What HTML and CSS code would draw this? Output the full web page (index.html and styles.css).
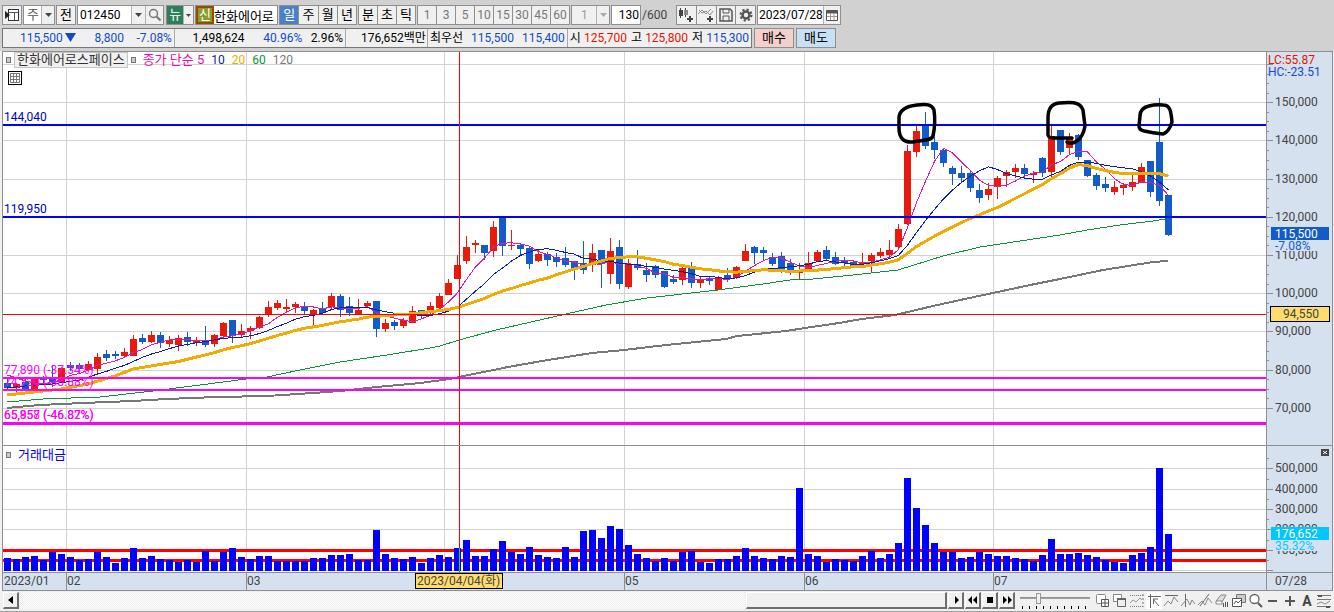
FILE: index.html
```
<!DOCTYPE html>
<html lang="ko">
<head>
<meta charset="utf-8">
<title>한화에어로스페이스 차트</title>
<link rel="stylesheet" href="styles.css">
</head>
<body>
<header class="top">
  <div class="toolbar">
    <button class="btn icon-btn" aria-label="패널"><svg width="16" height="16" viewBox="0 0 16 16"><rect x="4.500" y="2.500" width="10" height="11" fill="#fff" stroke="#333"/><path d="M5 5.500h9M10.500 6v7" stroke="#555"/><path d="M1 4v8l5-4z" fill="#222"/></svg></button>
    <span class="combo combo-kind"><select aria-label="종목 구분"><option>주</option></select><svg class="arrow" width="13" height="18"><path d="M3 7h7l-3.500 4z" fill="#444"/></svg></span>
    <button class="btn sq">전</button>
    <span class="combo combo-code"><input type="text" aria-label="종목 코드" value="012450"><button class="cell" aria-label="목록"><svg width="13" height="18"><path d="M3 7h7l-3.500 4z" fill="#444"/></svg></button><button class="cell find" aria-label="검색"><svg width="16" height="16" viewBox="0 0 16 16"><circle cx="6.500" cy="6.500" r="4" fill="none" stroke="#777" stroke-width="1.500"/><path d="M9.500 9.500l4 4" stroke="#777" stroke-width="2.200"/></svg></button></span>
    <span class="combo combo-news"><button class="news">뉴</button><button class="cell" aria-label="뉴스 목록"><svg width="9" height="18"><path d="M2 8h5l-2.500 3z" fill="#444"/></svg></button></span>
    <span class="combo combo-name"><button class="credit">신</button><input type="text" aria-label="종목명" value="한화에어로"></span>
    <div class="group period">
      <button class="on">일</button><button>주</button><button>월</button><button>년</button>
    </div>
    <div class="group unit">
      <button>분</button><button>초</button><button>틱</button>
    </div>
    <div class="group minutes">
      <button disabled>1</button><button disabled>3</button><button disabled>5</button><button disabled>10</button><button disabled>15</button><button disabled>30</button><button disabled>45</button><button disabled>60</button>
    </div>
    <span class="combo combo-tick"><select aria-label="간격" disabled><option>1</option></select><svg class="arrow" width="13" height="18"><path d="M3 7h7l-3.500 4z" fill="#aaa"/></svg></span>
    <label class="count"><input type="text" value="130" aria-label="조회 개수"><span>/600</span></label>
    <div class="group tools">
      <button aria-label="차트 유형"><svg width="18" height="18" viewBox="0 0 18 18"><path d="M3.500 2v10M8.500 2v9" stroke="#444"/><path d="M2 4h4v6H2z" fill="#444"/><path d="M7 4h4v5H7z" fill="#888"/><path d="M10 13h6M13 10v6" stroke="#444" stroke-width="2"/></svg></button><button aria-label="지표 추가"><svg width="18" height="18" viewBox="0 0 18 18"><path d="M1 8l4-4 4 4 5-5M2 4l3 3 4-2 4 4 3-4" fill="none" stroke="#888"/><path d="M10 13h6M13 10v6" stroke="#444" stroke-width="2"/></svg></button><button aria-label="저장"><svg width="18" height="18" viewBox="0 0 18 18"><path d="M3 3h10l2 2v10H3z" fill="none" stroke="#555" stroke-width="1.500"/><path d="M6 3v4h6V3M6 15v-5h6v5" fill="none" stroke="#555"/></svg></button><button aria-label="설정"><svg width="18" height="18" viewBox="0 0 18 18"><circle cx="9" cy="9" r="3.500" fill="none" stroke="#555" stroke-width="2.500"/><circle cx="9" cy="9" r="5.500" fill="none" stroke="#555" stroke-width="2" stroke-dasharray="2.200 2.100"/></svg></button>
    </div>
    <span class="combo combo-date"><input type="text" aria-label="날짜" value="2023/07/28"><button class="cell" aria-label="달력"><svg width="16" height="16" viewBox="0 0 16 16"><path d="M2.500 3.500h11v10h-11z" fill="#fff" stroke="#555"/><path d="M2 5h12" stroke="#555" stroke-width="3"/><path d="M3 9.500h10M6.500 6v7M10 6v7" stroke="#999"/></svg></button></span>
  </div>
  <div class="quote">
    <div class="quote-box">
      <div class="q q1 down"><span>115,500</span><svg width="11" height="10"><path d="M0 0h11L5.500 9z" fill="#0f4cc8"/></svg><span class="w-diff">8,800</span><span class="w-rate">-7.08%</span></div>
      <div class="q q2"><span class="w-vol">1,498,624</span><span class="w-58 down">40.96%</span><span class="w-41">2.96%</span></div>
      <div class="q q3"><span>176,652백만</span></div>
      <div class="q q4"><span>최우선</span><span class="w-50 down">115,500</span><span class="w-50 down">115,400</span></div>
      <div class="q q5"><span>시</span><span class="up w-45">125,700</span><span class="lab">고</span><span class="up w-45">125,800</span><span class="lab">저</span><span class="down w-45">115,300</span></div>
    </div>
    <button class="order buy">매수</button><button class="order sell">매도</button>
  </div>
</header>

<main class="chart">
  <section class="pane price">
    <svg id="price" class="plot" role="img" aria-label="일봉 차트"></svg>
    <div class="legend"><i class="dot"></i><b class="name">한화에어로스페이스</b><i class="dot"></i><span class="m5">종가 단순 5</span><span class="m10">10</span><span class="m20">20</span><span class="m60">60</span><span class="m120">120</span></div>
    <button class="grid-btn" aria-label="데이터 표"><svg width="14" height="14"><path d="M2.500 2.500h9v9h-9zM2 5.500h10M2 8.500h10M5.500 2v10M8.500 2v10" fill="none" stroke="#777"/></svg></button>
  </section>
  <svg id="priceAxis" class="axis price-axis"></svg>
  <section class="pane volume">
    <svg id="volume" class="plot" role="img" aria-label="거래대금"></svg>
    <div class="legend"><i class="dot"></i><span class="vol-name">거래대금</span></div>
  </section>
  <svg id="volumeAxis" class="axis volume-axis"></svg>
  <svg id="dates" class="dates"></svg>
  <div class="last-date">07/28</div>
</main>

<footer class="bottom">
  <div class="scroll">
    <button class="raised" aria-label="이전"><svg width="14" height="14"><path d="M9 3v8L4 7z"/></svg></button>
    <div class="track"></div>
    <div class="thumb"></div>
    <button class="raised" aria-label="다음"><svg width="14" height="14"><path d="M6 3v8l4-4z"/></svg></button>
    <button class="raised" aria-label="뒤로"><svg width="14" height="14"><path d="M6 3v8L2 7zM11 3v8L7 7z"/></svg></button>
    <button class="raised" aria-label="정지"><svg width="14" height="14"><path d="M4 4h6v6H4z"/></svg></button>
    <button class="raised" aria-label="앞으로"><svg width="14" height="14"><path d="M3 3v8l4-4zM8 3v8l4-4z"/></svg></button>
  </div>
  <div class="zoom"><input type="range" min="0" max="100" value="24" aria-label="확대"><div class="ticks"></div></div>
  <div class="draw">
    <button aria-label="차트 추가"><svg width="16" height="16" viewBox="0 0 16 16"><rect x="1.500" y="1.500" width="9" height="9" rx="1" fill="#fff" stroke="#888"/><path d="M6.500 6.500h7v7h-7zM10 7v6M7 10h6" fill="#fff" stroke="#555"/></svg></button><button aria-label="차트 복사"><svg width="16" height="16" viewBox="0 0 16 16"><path d="M1.500 1.500h8v7h-8z" fill="#fff" stroke="#888"/><path d="M5.500 5.500h8v8h-8z" fill="#eee" stroke="#666"/><path d="M5 6h9" stroke="#666" stroke-width="2"/></svg></button><button aria-label="구간"><svg width="16" height="16" viewBox="0 0 16 16"><path d="M1 2.500h13M1 13.500h13" stroke="#777" stroke-dasharray="1 1"/><path d="M1 10l3-3 3 2 4-4 2 2" fill="none" stroke="#999"/><path d="M14 1v13" stroke="#777" stroke-dasharray="2 2"/></svg></button><button class="active" aria-label="십자선"><svg width="16" height="16" viewBox="0 0 16 16"><path d="M2 3.500h13M4.500 1v14" stroke="#666"/><path d="M7 6h5M7.500 6v5M7 6l6 7" stroke="#666"/></svg></button><button aria-label="수평선"><svg width="16" height="16" viewBox="0 0 16 16"><path d="M2 2.500h13" stroke="#666"/><path d="M1 13l4-5 3 3 3-7 4 5" fill="none" stroke="#888"/></svg></button><button aria-label="수직선"><svg width="16" height="16" viewBox="0 0 16 16"><path d="M5.500 1v13" stroke="#666"/><path d="M1 13l6-7 3 6 2-5 3 4" fill="none" stroke="#888"/></svg></button><button aria-label="추세선"><svg width="16" height="16" viewBox="0 0 16 16"><path d="M3 13L12 1" stroke="#666"/><path d="M1 12l4-4 3 4 3-7 4 5" fill="none" stroke="#888"/></svg></button><button aria-label="지우개"><svg width="16" height="16" viewBox="0 0 16 16"><path d="M2 8l5-6h5L8 9z" fill="#ddd" stroke="#888"/><path d="M2 8h6v3H2z" fill="#fff" stroke="#888"/><path d="M9.500 14v-4M11.500 14v-5M13.500 14v-5" stroke="#555"/></svg></button><button aria-label="차트 저장"><svg width="16" height="16" viewBox="0 0 16 16"><path d="M5.500 1.500h9v8h-9z" fill="#ccc" stroke="#777"/><path d="M1.500 5.500h9v8h-9z" fill="#fff" stroke="#555"/><path d="M3 11l2-3 2 2 3-3" fill="none" stroke="#555"/></svg></button><button aria-label="돋보기"><svg width="16" height="16" viewBox="0 0 16 16"><circle cx="6.500" cy="6" r="4.500" fill="#fff" stroke="#666" stroke-width="1.300"/><path d="M10 10l4 4" stroke="#555" stroke-width="2"/></svg></button><button aria-label="축소"><svg width="16" height="16" viewBox="0 0 16 16"><path d="M3 8h9" stroke="#555" stroke-width="2"/></svg></button><button aria-label="확대"><svg width="16" height="16" viewBox="0 0 16 16"><path d="M3 8h10M8 3v10" stroke="#555" stroke-width="2"/></svg></button><button class="auto">A</button><button aria-label="설정"><svg width="16" height="16" viewBox="0 0 16 16"><path d="M1 2.500h14M1 6.500h14M1 13.500h14" stroke="#777"/><path d="M2 2h4v2H2zM10 13h4v2h-4z" fill="#555"/><path d="M1 11l4-2 4 2 5-3" fill="none" stroke="#888"/></svg></button>
  </div>
</footer>
<script src="chart.js"></script>
</body>
</html>
```
FILE: styles.css
```
* { box-sizing: border-box; }
:root {
  --line: #8f8f8f;
  --blue: #0f4cc8;
  --red: #e61400;
  --axis: #d6e1ef;
}
body, button, input, select {
  font-family: Roboto, "Noto Sans CJK KR", sans-serif;
  font-size: 13px;
  line-height: 16px;
}
body {
  margin: 0;
  min-height: 100vh;
  display: flex;
  flex-direction: column;
  background: #f0f0f0;
  color: #000;
}
button, input, select {
  margin: 0;
  padding: 0;
  border: 0;
  border-radius: 0;
  background: #f0f0f0;
  color: #000;
  appearance: none;
  min-width: 0;
}
button { display: flex; align-items: center; justify-content: center; }
svg { display: block; flex: none; }

/* header */
.top { background: #d1d1d1; padding: 5px 2px 3px; }
.toolbar { display: flex; height: 20px; }
.toolbar > * { flex: none; }
.btn, .combo, .group { border: 1px solid var(--line); background: #f0f0f0; height: 20px; }
.icon-btn { width: 20px; margin-right: 1px; }
.sq { width: 20px; margin-right: 1px; }
.combo { display: flex; }
.combo > * { height: 18px; }
.combo input { background: #fff; flex: 1; }
.cell { border-left: 1px solid #b4b4b4; background: #f0f0f0; }
.combo select { flex: 1; padding-left: 3px; background: #fff; color: #555; }
.arrow { background: #f0f0f0; border-left: 1px solid #b4b4b4; pointer-events: none; }
.combo-kind { width: 32px; margin-right: 1px; }
.combo-code { width: 87px; margin-right: 2px; }
.combo-code input { padding-left: 2px; font-size: 12px; }
.find { width: 18px; }
.combo-news { width: 28px; margin-right: 1px; }
.news { width: 17px; background: #2e7d5b; color: #fff; }
.combo-name { width: 83px; margin-right: 1px; }
.credit { width: 18px; background: #8a9a2c; color: #fff; border: 2px solid #964b00; }
.group { display: flex; }
.group button { flex: 1; border-left: 1px solid var(--line); height: 18px; }
.group button:first-child { border-left: 0; }
.period { width: 78px; margin-right: 1px; }
.group .on { background: #4a80c4; color: #fff; }
.unit { width: 58px; margin-right: 1px; }
.minutes { width: 153px; margin-right: 1px; }
.minutes button { color: #777; font-size: 12px; }
.combo-tick { width: 39px; margin-right: 1px; }
.combo-tick select { background: #f0f0f0; color: #777; padding-left: 9px; font-size: 12px; }
.count { display: flex; width: 64px; align-items: center; font-size: 12px; }
.count input { width: 30px; height: 20px; border: 1px solid var(--line); background: #fff; text-align: right; padding-right: 1px; margin-right: 1px; font-size: 12px; }
.count span { color: #444; }
.tools { width: 80px; margin-right: 1px; margin-left: 1px; }
.combo-date { width: 84px; }
.combo-date input { padding-left: 1px; font-size: 12px; }
.combo-date .cell { width: 17px; }

.quote { display: flex; margin-top: 3px; height: 20px; gap: 2px; }
.quote-box { display: flex; width: 750px; border: 1px solid #777; background: #f0f0f0; font-size: 12px; }
.q { display: flex; align-items: center; border-left: 1px solid #a8a8a8; padding: 0 2px; white-space: nowrap; text-align: right; }
.q:first-child { border-left: 0; }
.q1 { width: 171px; padding-left: 17px; justify-content: space-between; }
.q2 { width: 171px; }
.q3 { width: 82px; justify-content: flex-end; padding-right: 1px; }
.q4 { width: 140px; justify-content: space-between; }
.q5 { flex: 1; }
.w-diff { width: 46px; }
.w-rate { width: 46px; }
.w-vol { width: 68px; }
.w-58 { width: 58px; }
.w-41 { width: 41px; }
.w-50 { width: 50px; }
.w-45 { width: 46px; }
.lab { margin-left: 4px; }
.down { color: var(--blue); }
.up { color: var(--red); }
.order { width: 40px; border: 1px solid var(--line); }
.buy { background: #f5cfca; }
.sell { background: #c8dff6; }

/* chart */
.chart {
  display: grid;
  grid-template-columns: 1fr 66px;
  margin: 0 1px 0 2px;
  border: 1px solid var(--line);
  background: #fff;
}
.pane { position: relative; min-width: 0; }
.plot { width: 100%; }
.price .plot, .price-axis { height: 393px; }
.volume .plot, .volume-axis { height: 127px; }
.volume, .volume-axis { border-top: 1px solid var(--line); }
.volume .plot { height: 126px; }
.axis { width: 100%; background: var(--axis); border-left: 1px solid var(--line); }
.dates, .last-date { width: 100%; height: 18px; background: var(--axis); border-top: 1px solid var(--line); }
.last-date { border-left: 1px solid var(--line); color: #444; padding-left: 8px; font-size: 12px; }
.legend { position: absolute; left: 3px; top: 0; height: 16px; display: flex; align-items: center; gap: 7px; white-space: nowrap; }
.volume .legend { top: 1px; }
.dot { width: 5px; height: 6px; border: 1px solid #777; background: #ccc; }
.name { font-weight: 400; background: #f0f0f0; border: 1px solid #c4c4c4; color: #333; padding: 0 2px; line-height: 14px; margin: 0 -4px; }
.m5 { color: #e010b0; }
.m10 { color: #0a20b0; }
.m20 { color: #f0ac00; }
.m60 { color: #0a9438; }
.m120 { color: #777; }
.m10, .m20, .m60, .m120 { font-size: 12px; }
.vol-name { color: #00f; }
.grid-btn { position: absolute; left: 5px; top: 19px; border: 1px solid #000; background: #fff; width: 14px; height: 14px; overflow: hidden; }
svg text { font-size: 12px; }

/* bottom bar */
.bottom { display: flex; height: 17px; margin: 1px 0 0 3px; flex: none; }
.scroll { flex: 1; display: flex; gap: 1px; }
.raised { width: 16px; height: 17px; border: 1px solid #fff; border-right: 2px solid #6e6e6e; border-bottom: 2px solid #6e6e6e; }
.track { flex: 1; background: repeating-conic-gradient(#fff 0 25%, #ececec 0 50%) 0 0 / 2px 2px; }
.thumb { width: 201px; height: 17px; border: 1px solid #fff; border-right: 2px solid #6e6e6e; border-bottom: 2px solid #6e6e6e; background: #f0f0f0; }
.zoom { width: 80px; padding: 0 5px; }
.zoom input { display: block; width: 70px; height: 12px; background: linear-gradient(#888, #aaa) 0 5px / 100% 2px no-repeat; }
.zoom input::-webkit-slider-thumb { appearance: none; width: 5px; height: 11px; background: #f0f0f0; border: 1px solid #999; }
.ticks { height: 3px; margin: 2px 2px 0; background: repeating-linear-gradient(90deg, #000 0 1px, transparent 1px 7px); }
.draw { display: flex; gap: 1px; width: 239px; }
.draw button { width: 16px; height: 17px; flex: none; overflow: hidden; }
.draw .active { background: #fff; }
.draw .auto { color: #444; font-weight: 700; font-size: 14px; }
body::after { content: ""; margin-top: auto; border-top: 1px solid #a0a0a0; }
```
FILE: chart.js
```
const STEP = 9;
const LEFT = 3;
const PRICE_TOP = 52;
const VOLUME_TOP = 446;

// direction, high, body top, body bottom, low
const candles = `b378,383,388,389 r383,384,388,392 b379,382,389,393 r379,379,389,391 b376,379,380,384 b365,378,382,387 r367,368,382,383 b362,365,368,371 b363,365,369,373 r361,364,370,371
r353,357,369,374 b350,354,358,361 b351,354,356,359 r348,352,356,357 r335,339,356,356 b334,338,342,344 r331,335,342,343 b332,335,343,348 r336,340,344,347 r335,338,345,351
b332,337,342,346 r337,340,343,346 b326,342,345,347 r334,335,344,347 r322,323,336,337 b320,320,336,343 r324,331,335,338 r326,328,331,339 r316,317,328,329 r301,307,314,317
r300,303,308,310 r299,307,309,312 r302,304,307,313 b302,307,311,314 r309,310,314,326 b302,308,313,315 r293,296,307,309 b294,296,310,317 b297,306,313,316 r299,310,314,315
r301,303,306,308 b301,301,329,337 r319,323,329,332 b320,322,326,330 r318,320,326,328 r306,311,323,323 b310,310,314,319 r302,306,313,315 r293,296,308,309 r279,283,295,295
r255,265,279,279 r236,247,261,264 r240,243,245,253 b245,245,253,260 r221,227,251,257 b218,218,246,256 r230,245,246,250 b243,245,249,256 b247,248,264,269 r249,254,261,262
b252,254,260,266 b253,257,262,267 b247,258,265,267 b261,261,269,280 b241,263,270,274 r244,253,265,272 b250,250,264,288 r238,251,274,284 b240,247,284,289 r259,264,287,289
b250,264,268,270 b263,270,275,282 b265,266,275,278 b271,271,287,288 b275,279,282,284 r266,268,280,285 b262,266,283,288 r277,279,283,288 b276,278,281,285 r276,278,290,290
b268,275,279,282 r266,267,278,279 r244,251,261,261 b246,247,253,264 b247,250,253,260 b253,257,264,266 b252,256,269,273 b259,263,273,275 r263,270,273,279 r252,263,271,271
r250,252,261,262 b246,250,259,260 b252,257,264,265 b257,261,263,266 b262,262,267,267 r253,262,264,265 r253,255,261,272 r248,252,256,258 r240,250,255,258 r224,229,247,248
r145,151,224,225 r126,131,152,157 b112,125,146,149 b137,142,150,159 b149,150,163,167 b166,168,174,185 b166,173,178,182 b171,173,188,192 b184,190,198,203 r183,189,195,200
r176,178,187,199 r170,172,176,187 r164,168,172,178 b164,168,174,178 r171,173,175,183 b157,158,173,177 r126,136,172,179 b130,130,152,155 r133,139,148,155 b134,135,157,160
b160,160,176,177 b173,175,186,190 b177,184,188,192 r181,187,192,195 r183,185,188,195 r172,182,187,191 r163,167,183,183 b161,161,192,197 b98,142,201,206 b195,195,235,236`
  .split(/\s+/).map(s => [s[0], ...s.slice(1).split(',').map(Number)]);

const volumes = [558,559,557,556,560,552,554,557,560,559,552,557,563,558,548,558,556,559,560,562,560,562,551,561,552,548,557,559,556,556,561,561,561,561,558,558,555,555,554,560,560,530,554,558,559,557,563,558,555,557,548,540,556,556,549,541,552,554,547,555,557,558,547,557,531,530,538,526,529,545,554,558,561,558,561,552,551,562,563,559,559,556,548,556,558,559,556,557,488,554,556,562,559,560,561,556,551,558,554,543,478,508,525,543,552,552,558,557,552,554,556,556,558,559,561,555,539,554,554,553,555,557,560,562,563,555,553,547,468,534];

const closes = candles.map(c => c[0] === 'r' ? c[2] : c[3]);
const center = i => i * STEP + 7.5;

function average(n, lead) {
  return lead.concat(closes.slice(n - 1).map((_, k) => {
    const i = k + n - 1;
    return [center(i), closes.slice(i - n + 1, i + 1).reduce((a, b) => a + b) / n];
  }));
}
const ma5 = average(5, [[7.5, 375], [16.5, 378], [25.5, 381], [34.5, 383]]);
const ma10 = average(10, [[7.5, 388], [25.5, 386], [52.5, 384], [79.5, 380]]);
const ma20 = average(20, [[7, 395], [34, 392], [61, 389], [88, 384], [115, 376], [133, 369], [151, 366], [169, 363]]);
const ma60 = [[7,402],[43,399],[100,397],[153,391],[200,385],[246,379],[267,377],[300,370],[340,362],[387,355],[430,348],[440,346],[459,340],[496,330],[566,314],[606,305],[647,298],[718,290],[763,284],[790,280],[813,279],[853,275],[898,270],[943,256],[980,247],[1020,241],[1060,235],[1087,230],[1120,225],[1153,221],[1165,219]];
const ma120 = [[7,408],[40,405],[83,403],[133,401],[167,399],[217,397],[267,396],[313,393],[340,391],[377,387],[420,383],[450,379],[459,377],[508,367],[542,361],[592,353],[624,350],[666,345],[726,339],[737,336],[786,331],[805,328],[839,323],[862,319],[895,315],[933,306],[974,297],[993,293],[1030,285],[1060,279],[1103,270],[1153,262],[1168,261]];

const rect = (x, y, w, h, fill, extra = '') => `<rect x="${x}" y="${y}" width="${w}" height="${h}" fill="${fill}" ${extra}/>`;
const text = (x, y, s, fill = '#444') => `<text x="${x}" y="${y}" fill="${fill}">${s}</text>`;
const poly = (pts, color, w) => `<polyline points="${pts.map(p => p.join()).join(' ')}" fill="none" stroke="${color}" stroke-width="${w}"/>`;
const months = [66, 246, 444, 624, 804, 993];
const plot = (top, body) => `<g transform="translate(${-LEFT} ${-top})">${body}</g>`;
const row = (y, h, color) => rect(LEFT, y, '100%', h, color);

// price pane
let s = [64, 102, 140, 179, 217, 255, 293, 331, 370, 408].map(y => row(y, 1, '#d2d2d2')).join('');
s += months.map(x => rect(x, PRICE_TOP, 1, 393, '#d2d2d2')).join('');
s += candles.map(([d, hi, t, b, lo], i) => {
  const color = d === 'r' ? '#e81a0c' : '#115cca';
  return rect(i * STEP + 7, hi, 1, lo - hi, color) + rect(i * STEP + 4, t, 7, Math.max(1, b - t), color);
}).join('');
s += `<g shape-rendering="crispEdges">${poly(ma5, '#d81cb4', 1)}${poly(ma10, '#0a20a8', 1)}${poly(ma20, '#f0ac00', 3)}${poly(ma60, '#0a9438', 1)}${poly(ma120, '#777', 2)}</g>`;
s += row(124, 2, '#00f') + row(216, 2, '#00f');
s += row(377, 2, '#f0f') + row(389, 2, '#f0f') + row(422, 3, '#f0f');
s += row(314, 1, '#f00') + rect(459, PRICE_TOP, 1, 393, '#f00');
s += text(4, 121, '144,040', '#0000c8') + text(4, 213, '119,950', '#0000c8');
s += text(4, 374, '77,890 (-37.34%)', '#f0f') + text(4, 386, '74,720 (-38.88%)', '#f0f');
s += text(4, 419, '65,957 (-46.82%)', '#f0f') + text(4, 419, '65,858 (-46.87%)', '#f0f');
s += `<g fill="none" stroke="#000" stroke-width="3.500" stroke-linecap="round" stroke-linejoin="round">
<path d="M899 117C900 109 908 106 917 105C926 104 932 104 934 110C935 117 935 127 933 136C931 141 922 140 913 142C903 143 899 137 899 128Z"/>
<path d="M1072 138L1053 138Q1047 138 1048 132L1048 118Q1048 104 1059 103C1069 102 1080 101 1083 110L1085 126Q1083 137 1077 141Q1071 145 1067 142"/>
<path d="M1149 106Q1140 108 1140 116L1139 126Q1139 130 1144 131Q1153 133 1163 134Q1169 132 1172 122C1171 111 1170 105 1163 105Q1156 104 1149 106"/></g>`;
document.getElementById('price').innerHTML = plot(PRICE_TOP, s);

// price scale, its own origin at the axis line
const AX = 1267;
const axis = (top, body) => `<g transform="translate(${-AX} ${-top})">${body}</g>`;
s = '';
for (let k = 0; k <= 36; k++) {
  const y = Math.round(64 + k * 9.55);
  s += rect(AX, y, k % 4 ? 2 : 6, 1, '#8f8f8f');
}
[[102, '150,000'], [140, '140,000'], [179, '130,000'], [217, '120,000'], [255, '110,000'], [293, '100,000'], [331, '90,000'], [370, '80,000'], [408, '70,000']]
  .forEach(([y, v]) => { s += text(1275, y + 4, v); });
s += rect(1273, 240, 57, 11, '#d6e1ef') + rect(1271, 227, 58, 13, '#115cca');
s += text(1275, 238, '115,500', '#fff') + text(1275, 250, '-7.08%', '#115cca');
s += rect(1270.5, 306.5, 59, 15, '#ffdc6e', 'stroke="#000"') + text(1283, 318, '94,550');
s += text(1268, 64, 'LC:55.87', '#e61400') + text(1268, 76, 'HC:-23.51', '#0f4cc8');
document.getElementById('priceAxis').innerHTML = axis(PRICE_TOP, s);

// volume pane
s = [468, 489, 509, 529, 570].map(y => row(y, 1, '#d2d2d2')).join('');
s += months.map(x => rect(x, VOLUME_TOP, 1, 126, '#d2d2d2')).join('');
s += row(549, 3, '#f00') + row(559, 3, '#f00');
s += rect(459, VOLUME_TOP, 1, 126, '#f00');
s += volumes.map((y, i) => rect(i * STEP + 4, y, 7, 571 - y, '#00f')).join('');
s += rect(459, 548, 1, 23, '#00e070');
document.getElementById('volume').innerHTML = plot(VOLUME_TOP, s);

s = '';
[458, 468, 479, 489, 499, 509, 519, 529, 540, 550, 560, 570].forEach((y, k) => { s += rect(AX, y, k % 2 ? 6 : 2, 1, '#8f8f8f'); });
[[468, '500,000'], [489, '400,000'], [509, '300,000'], [529, '200,000'], [550, '100,000']].forEach(([y, v]) => { s += text(1275, y + 4, v); });
s += rect(1273, 540, 57, 11, '#d6e1ef') + rect(1271, 527, 58, 13, '#00c8ff');
s += text(1275, 538, '176,652', '#fff') + text(1275, 550, '35.32%', '#00c8ff');
s += rect(1321, 449, 8, 7, '#444') + '<path d="M1323 451l4 3m0-3l-4 3" stroke="#fff"/>';
document.getElementById('volumeAxis').innerHTML = axis(VOLUME_TOP, s);

// date scale
s = months.map(x => rect(x, 573, 1, 17, '#8f8f8f')).join('');
s += text(4, 585, '2023/01');
months.forEach((x, k) => { if (k !== 2) s += text(x + 1, 585, '0' + (k + 2)); });
s += rect(415.5, 573.5, 87, 15, '#ffdc6e', 'stroke="#000"') + text(417, 585, '2023/04/04(화)');
document.getElementById('dates').innerHTML = plot(573, s);
```
